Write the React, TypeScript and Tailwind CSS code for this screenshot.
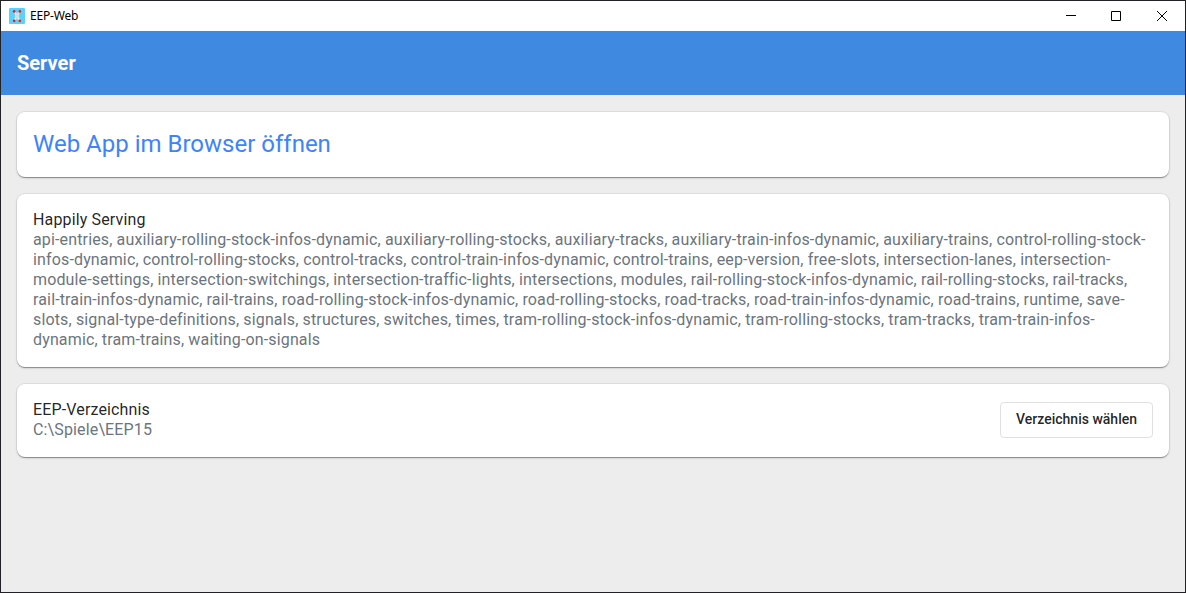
import React from 'react';

const services =
  'api-entries, auxiliary-rolling-stock-infos-dynamic, auxiliary-rolling-stocks, auxiliary-tracks, auxiliary-train-infos-dynamic, auxiliary-trains, control-rolling-stock-infos-dynamic, control-rolling-stocks, control-tracks, control-train-infos-dynamic, control-trains, eep-version, free-slots, intersection-lanes, intersection-module-settings, intersection-switchings, intersection-traffic-lights, intersections, modules, rail-rolling-stock-infos-dynamic, rail-rolling-stocks, rail-tracks, rail-train-infos-dynamic, rail-trains, road-rolling-stock-infos-dynamic, road-rolling-stocks, road-tracks, road-train-infos-dynamic, road-trains, runtime, save-slots, signal-type-definitions, signals, structures, switches, times, tram-rolling-stock-infos-dynamic, tram-rolling-stocks, tram-tracks, tram-train-infos-dynamic, tram-trains, waiting-on-signals';

function Card({ className, children }: { className: string; children: React.ReactNode }) {
  return (
    <section
      className={`rounded-lg bg-white px-4 shadow-[0_0_0_1px_rgba(0,0,0,0.05),0_2px_1px_-1px_rgba(0,0,0,0.2),0_1px_1px_0_rgba(0,0,0,0.16),0_1px_3px_0_rgba(0,0,0,0.12)] ${className}`}
    >
      {children}
    </section>
  );
}

function AppIcon() {
  return (
    <svg width="16" height="16" viewBox="0 0 16 16">
      <rect width="16" height="16" rx="1" fill="#5ad3fb" />
      <path d="M5.8 3.4L7.2 7v2l-1.6 3.6M10.2 3.4L8.8 7v2l1.6 3.6" stroke="#e8e4e4" strokeWidth="2" fill="none" />
      <path d="M8 5.5v5" stroke="#d5dcdf" strokeWidth="2.4" />
      <g fill="#dc2430">
        <circle cx="5.2" cy="3.4" r="1.4" />
        <circle cx="10.8" cy="3.4" r="1.4" />
        <circle cx="5.2" cy="12.8" r="1.4" />
        <circle cx="10.8" cy="12.8" r="1.4" />
      </g>
    </svg>
  );
}

export default function App() {
  return (
    <div className="flex h-[593px] w-[1186px] flex-col border border-[#222226] bg-[#ededed] font-['Roboto',sans-serif]">
      <div className="flex h-[30px] shrink-0 items-center bg-white pl-2">
        <AppIcon />
        <span className="ml-[5px] font-['Noto_Sans',sans-serif] text-[12px] leading-4 tracking-[-0.2px] text-black">EEP-Web</span>
        <div className="ml-auto flex">
          {['M1 4.5H11', 'M0.5 0.5H9.5V9.5H0.5Z', 'M0 0L10 10M10 0L0 10'].map((d) => (
            <div key={d} className="flex w-[46px] justify-center">
              <svg width="11" height="11" viewBox="0 0 11 11" fill="none" stroke="#000">
                <path d={d} />
              </svg>
            </div>
          ))}
        </div>
      </div>
      <header className="flex h-16 shrink-0 items-center bg-[#3f8ae0] px-4">
        <h1 className="text-[20px] leading-8 font-bold text-white">Server</h1>
      </header>
      <main className="flex flex-col gap-[17px] px-4 pt-[17px]">
        <Card className="h-[65px] pt-4">
          <a className="block text-[24px] leading-8 text-[#3d84fc]">Web App im Browser öffnen</a>
        </Card>
        <Card className="h-[173px] pt-4 text-[16px] leading-5 tracking-[0.144px]">
          <h2 className="text-black/87">Happily Serving</h2>
          <p className="text-[#6c757d]">{services}</p>
        </Card>
        <Card className="flex h-[73px] justify-between pt-4 text-[16px] leading-5 tracking-[0.144px]">
          <div>
            <h2 className="text-black/87">EEP-Verzeichnis</h2>
            <p className="text-[#6c757d]">C:\Spiele\EEP15</p>
          </div>
          <button className="mt-0.5 h-9 rounded border border-black/12 px-[15px] pb-0.5 text-[14px] font-medium tracking-normal text-black/87">
            Verzeichnis wählen
          </button>
        </Card>
      </main>
    </div>
  );
}
